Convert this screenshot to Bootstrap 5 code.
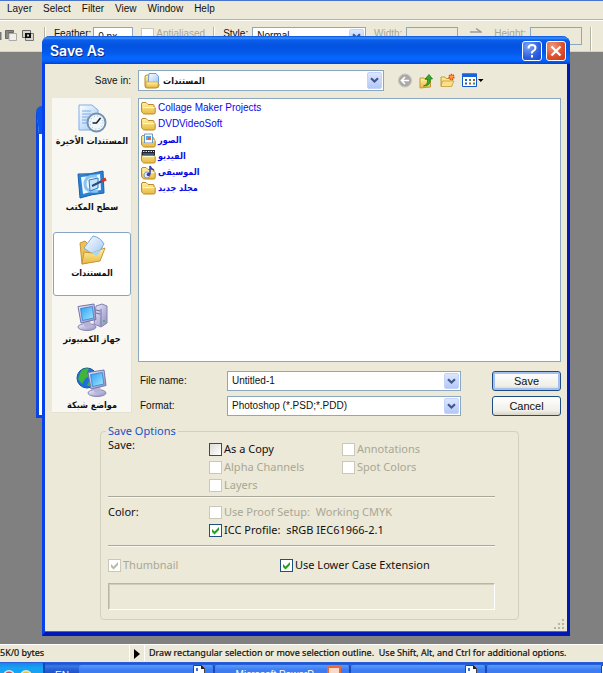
<!DOCTYPE html>
<html lang="en">
<head>
<meta charset="utf-8">
<meta name="viewport" content="width=device-width, initial-scale=1">
<title>Save As</title>
<link rel="stylesheet" href="https://cdn.jsdelivr.net/npm/bootstrap@5.3.0/dist/css/bootstrap.min.css">
<script src="https://cdn.jsdelivr.net/npm/bootstrap@5.3.0/dist/js/bootstrap.bundle.min.js"></script>
<style>
:root{--face:#ece9d8;--edge:#8ba8c0;--off:#a9a794;--ui:"Liberation Sans","DejaVu Sans Condensed",sans-serif}
body{font:10px/14px var(--ui);color:#111;background:gray;overflow:hidden}
button,input,select{font:inherit;color:inherit}
a{color:inherit;text-decoration:none}
.menu-strip{background:var(--face);border-top:1px solid #4a74cc;border-bottom:1px solid #b5b3a6;height:20px;padding:1px 7px 0;gap:11px}
.opt-strip{background:var(--face);border-top:1px solid #fff;border-bottom:1px solid #d5d2c2;height:32px;padding:6px 11px 0 0}
.opt-strip .field{width:52px;height:18px;border:1px solid var(--edge);background:#fff;padding:0 0 0 4px;border-radius:0}
.opt-strip .field.short{width:40px;margin-left:2px}
.opt-strip .field:disabled{background:var(--face)}
.opt-strip .combo{height:18px}
.rule{width:2px;flex:none;height:24px;background:#b5b3a6;border-right:1px solid #fff}
.dim{color:var(--off)}
.status{background:var(--face);border-top:1px solid #fff;height:18px;font:9px/16px "Noto Sans",sans-serif;-webkit-text-stroke:.2px #111}
.status .cell{border-right:1px solid #fff;height:16px}
.kb{width:130px}
.taskbar{height:11px;background:linear-gradient(#1c55d8 0 1px,#3a7ae6 3px,#2a62d8 6px,#1f52c8);border-top:1px solid #2860dc;overflow:hidden;color:#fff}
.start-zone{width:45px;background:linear-gradient(#1c86e8,#16a3f2 5px);border-right:2px solid #0e49b5;height:11px}
.lang{width:34px;line-height:26px}
.task{height:14px;margin-top:2px;background:linear-gradient(#5a9bfa,#3c7cf0 5px);border:0;border-right:2px solid #1c49b8;border-radius:3px;padding:0 8px;line-height:20px;flex:0 0 136px;overflow:hidden;white-space:nowrap;display:flex;justify-content:flex-end;gap:6px}
.behind{left:36px;top:106px;width:60px;height:312px;border:3px solid #0a45e0;border-top:28px solid #0a55ea;border-radius:6px 0 0 0;background:#fff}
.dialog-win{left:42px;right:33px;top:36px;background:var(--face);border:3px solid #0831d9;border-width:0 3px 4px;border-color:#0831d9 #0018b4 #0018b4 #0840ea;border-radius:8px 8px 0 0;box-shadow:inset 0 -1px #2b6cf0}
.title-strip{height:28px;margin:0 -3px;padding:1px 4px 0 8px;border-radius:8px 8px 0 0;background:linear-gradient(#0a4fd8,#3a92ff 2px,#0a5fec 4px,#0453e0 9px,#0458ea 16px,#0568ff 22px,#0560f8 25px,#0140d0);color:#fff;font:600 14px/27px Inter,sans-serif;text-shadow:1px 1px #0a2a86}
.title-strip h1{font:inherit;margin:0}
.cap{width:20px;height:20px;border:1px solid #fff;border-radius:3px;padding:0;display:flex;background:radial-gradient(circle at 30% 25%,#7ea4f6,#2c5fe0 60%,#1a48c8)}
.cap.shut{background:radial-gradient(circle at 30% 25%,#f0997e,#e0502c 55%,#c33818)}
.win-body{padding:6px 6px 12px 7px}
.look{margin-bottom:7px}
.look>label{width:86px;padding-right:7px;text-align:right}
.combo{height:20px;border:1px solid var(--edge);background:#fff;padding:1px;min-width:0}
.combo.tall{height:21px;flex:0 1 246px;margin-right:14px}
.combo select,.combo input{appearance:none;border:0;background:none;flex:1;min-width:0;padding:0 0 0 3px;outline:0}
.drop{width:15px;border:1px solid #c3d3fb;border-radius:2px;padding:0;background:linear-gradient(#dce7ff,#b4c8f6);display:flex;align-items:center;justify-content:center}
.tools{gap:7px}
.tool{border:0;background:none;padding:0;display:flex}
.ar,.ar select{font:bold 9px/14px "DejaVu Sans Condensed","DejaVu Sans",sans-serif}
.main-grid{display:grid;grid-template-columns:80px minmax(0,1fr);column-gap:6px}
.places{background:#f8f7f2;border:1px solid #e4e1d2;border-width:0 1px 1px 0;height:315px;overflow:hidden;padding:2px 0 0 1px}
.place{width:100%;height:64px;margin-bottom:2px;border:1px solid transparent;border-radius:3px;background:none;padding:2px 0 0;display:flex;flex-direction:column;align-items:center;white-space:nowrap}
.place svg{flex:none}
.place.now{background:#fff;border-color:#86a4c6}
.files{height:264px;border:1px solid var(--edge);background:#fff;padding:1px;margin:0 0 9px;list-style:none;color:#0808e8}
.files a{display:flex;align-items:center;gap:2px;height:16px}
.pair{display:grid;grid-template-columns:89px minmax(0,1fr) 69px;row-gap:5px;align-items:center}
.pair>label{padding-left:2px}
.pair .combo{margin-right:31px}
.push{height:20px;border:1px solid #1c4c82;border-radius:3px;background:linear-gradient(#fff,#f0efe8 75%,#d9d4c8);font-size:11px;line-height:16px;padding:0}
.push.go{box-shadow:inset 0 0 0 2px #a4c0f0}
.opts{font:11px/14px "Noto Sans",sans-serif;margin:8px 42px 0 48px;border:1px solid #d3d0bd;border-radius:4px;padding:0 23px 9px 7px}
.opts legend{font:inherit;float:none;width:auto;color:#1c50c8;padding:0 2px;margin:0 0 0 -2px;height:14px}
.sect{display:grid;grid-template-columns:101px 133px 1fr;border-bottom:1px solid #aaa899;box-shadow:0 1px #f8f7f0}
.sect .stack{display:grid;row-gap:4px;align-content:start}
.tick{display:flex;align-items:center;gap:2px;height:14px;white-space:nowrap}
.tick.thumb{width:172px}
.tick input{appearance:none;flex:none;width:13px;height:13px;border:1px solid #1c5180;background:linear-gradient(135deg,#dcdcd7,#fff);margin:0}
.tick input:disabled{border-color:#cac8bb;background:#fff}
.tick input:disabled+*{color:var(--off)}
.tick input:checked{background:url("data:image/svg+xml,%3Csvg xmlns='http://www.w3.org/2000/svg' viewBox='0 0 11 11'%3E%3Cpath d='M2 4v3l2.500 2.500L9 5V2L4.500 6.500z' fill='%2321a121'/%3E%3C/svg%3E") #fff}
.tick input:checked:disabled{background-image:url("data:image/svg+xml,%3Csvg xmlns='http://www.w3.org/2000/svg' viewBox='0 0 11 11'%3E%3Cpath d='M2 4v3l2.500 2.500L9 5V2L4.500 6.500z' fill='%23bbb9aa'/%3E%3C/svg%3E")}
.sunk{height:27px;margin-top:11px;border:1px solid;border-color:#b7b5a5 #fff #fff #b7b5a5;box-shadow:inset 1px 1px #d0cdbb}
.grip{right:2px;bottom:2px}
</style>
</head>
<body class="min-vh-100 d-flex flex-column position-relative">
<svg class="position-absolute" width="0" height="0" aria-hidden="true">
<defs>
<linearGradient id="gy" x2="0" y2="1"><stop stop-color="#fff3a8"/><stop offset="1" stop-color="#e9b93f"/></linearGradient>
<linearGradient id="gb" x2="1" y2="1"><stop stop-color="#2d9df4"/><stop offset="1" stop-color="#a4eaff"/></linearGradient>
<linearGradient id="gp" x2="1" y2="1"><stop stop-color="#f0effb"/><stop offset="1" stop-color="#8e8cc0"/></linearGradient>
<linearGradient id="gd" x2="1" y2="1"><stop stop-color="#fff"/><stop offset="1" stop-color="#9cc4f4"/></linearGradient>
</defs>
<symbol id="folder" viewBox="0 0 16 14"><path d="M1.500 3q0-1.500 1.500-1.500h3l2 2h5q1 0 1 1V6q1.200 0 1.200 1v4.500q0 1.500-1.500 1.500h-9Q3 13 2.500 12L1.500 10z" fill="url(#gy)" stroke="#b98a2a"/><path d="M3 6.500h11.500" stroke="#fff8cf"/></symbol>
<symbol id="caret" viewBox="0 0 9 7"><path d="M1 1.200l3.500 3.300L8 1.200" fill="none" stroke="#40568c" stroke-width="2.200"/></symbol>
<symbol id="page" viewBox="0 0 12 12"><path d="M.5.500h8l3 3V12H.5z" fill="#fff" stroke="#444"/><path d="M8 0v4h4" fill="#222"/><path d="M3 3h2v3H3z" fill="#3a70c8"/></symbol>
<symbol id="monitor" viewBox="0 0 22 28"><ellipse cx="11" cy="24" rx="9" ry="3.500" fill="url(#gp)" stroke="#8583b4"/><path d="M8 18l6-1 1 6q-4 2-7 0z" fill="#b5b4d8"/><path d="M2 3.500L18 1l2 15.500L5 20z" fill="url(#gp)" stroke="#7775aa"/><path d="M4.500 5.500L16.300 3.500l1.500 11.500L6.500 17.500z" fill="url(#gb)" stroke="#2878c8" stroke-width=".7"/></symbol>
</svg>

<nav class="menu-strip d-flex" aria-label="Menu">
<a href="#">Layer</a><a href="#">Select</a><a href="#">Filter</a><a href="#">View</a><a href="#">Window</a><a href="#">Help</a>
</nav>
<div class="opt-strip d-flex align-items-start">
<svg width="36" height="16" viewBox="0 0 36 16" class="flex-shrink-0"><path d="M0 5v8h1.500V5z" fill="#777"/><path d="M5.500 11.500V3.500h8v2h-5v6z" fill="#888" stroke="#666"/><path d="M9 6.500h7.500v7H9z" fill="#f2f0e6" stroke="#aaa"/><path d="M22.500 3.500h8v7h-8z" fill="#d8d6cc" stroke="#666"/><path d="M25.500 6.500h8v7h-8z" fill="#d8d6cc" stroke="#777"/><path d="M25 6h6v5h-6z" fill="#111"/><path d="M27 7.500h2v2h-2z" fill="#ccc"/></svg>
<span class="rule mx-2"></span>
<label for="feather">Feather:</label>
<input id="feather" class="field short" value="0 px">
<label class="tick ms-2"><input type="checkbox" disabled><span>Antialiased</span></label>
<span class="rule mx-2"></span>
<label for="sty">Style:</label>
<div class="combo d-flex ms-1 flex-grow-1"><select id="sty"><option>Normal</option></select><span class="drop"><svg width="9" height="7"><use href="#caret"/></svg></span></div>
<label for="w" class="dim ms-2 me-1">Width:</label><input id="w" class="field" disabled>
<svg class="mx-2 px-1 flex-shrink-0" width="20" height="12" viewBox="0 0 12 12"><path d="M0 5h8M6 1.500L11 5H5" fill="none" stroke="#999" stroke-width="1.500"/></svg>
<label for="h" class="dim me-1">Height:</label><input id="h" class="field" disabled>
<span class="rule ms-2"></span>
</div>

<div class="flex-grow-1"></div>
<div class="behind position-absolute"></div>

<main class="dialog-win position-absolute">
<div class="title-strip d-flex align-items-center">
<h1 class="flex-grow-1">Save As</h1>
<button class="cap me-1" aria-label="Help"><svg width="18" height="18"><path d="M5.500 6.500q0-3.500 3.500-3.500t3.500 3q0 1.800-2 2.800T9 11.500M9 13v2.500" fill="none" stroke="#fff" stroke-width="2"/></svg></button>
<button class="cap shut" aria-label="Close"><svg width="18" height="18"><path d="M4.500 4.500l9 9m0-9l-9 9" stroke="#fff" stroke-width="2.200"/></svg></button>
</div>
<div class="win-body">
<div class="look d-flex align-items-center">
<label for="savein">Save in:</label>
<div class="combo tall ar d-flex">
<svg class="ms-1 flex-shrink-0" width="16" height="17" viewBox="0 0 16 17"><path d="M1 5q0-2 2-2h2v9h10v1q0 3-3 3H3q-2 0-2-2z" fill="url(#gy)" stroke="#b98a2a"/><path d="M5 1.500h7l2.500 3V12H4z" fill="url(#gd)" stroke="#6f9fd4"/><path d="M2 10h12v4q0 1.500-2 1.500H3q-1 0-1-1z" fill="url(#gy)" stroke="#c7963a" stroke-width=".6"/></svg>
<select id="savein"><option>المستندات</option></select><span class="drop"><svg width="9" height="7"><use href="#caret"/></svg></span></div>
<div class="tools d-flex align-items-center">
<button class="tool" aria-label="Back"><svg width="14" height="15" viewBox="0 0 14 15"><circle cx="7" cy="7.500" r="6.500" fill="#aaa9a3" stroke="#c6c5be"/><path d="M7 4L3.500 7.500 7 11M4 7.500h7" fill="none" stroke="#fff" stroke-width="1.700"/></svg></button>
<button class="tool" aria-label="Up one level"><svg width="14" height="16" viewBox="0 0 14 16"><path d="M1 5h4l1 1.500h5.500V14L1 15z" fill="url(#gy)" stroke="#c39a35"/><path d="M4.500 13Q9 12 8.500 6H6l4-4.500L13.500 6H11.300Q12 13 4.500 13z" fill="#35a82e" stroke="#187318" stroke-width=".7"/></svg></button>
<button class="tool" aria-label="New folder"><svg width="15" height="15" viewBox="0 0 15 15"><path d="M1 4h4l1 1.500h6V13H1z" fill="url(#gy)" stroke="#c39a35"/><path d="M2.500 8H14l-2.500 5.500H1z" fill="#fbe08a" stroke="#c39a35" stroke-width=".7"/><circle cx="11.500" cy="4" r="2.400" fill="#ff9a3c" stroke="#e53b14" stroke-width="1.500" stroke-dasharray="1.200 .7"/></svg></button>
<button class="tool" aria-label="Views"><svg width="22" height="15" viewBox="0 0 22 15"><path d="M.5 1h14v12.500H.5z" fill="#fff" stroke="#1558c8"/><path d="M0 .5h15V4H0z" fill="#1b62dc"/><path d="M3 7h2M3 10.500h2" stroke="#2a58c0" stroke-width="1.800"/><path d="M7 7h2M11 10.500h2" stroke="#2a9a50" stroke-width="1.800"/><path d="M11 7h2M7 10.500h2" stroke="#c05030" stroke-width="1.800"/><path d="M16 6h5.500L18.800 9z" fill="#000"/></svg></button>
</div>
</div>
<div class="main-grid">
<div class="places ar">
<button class="place"><svg width="30" height="31" viewBox="0 0 30 31"><path d="M2 2h13l6 5v20H2z" fill="url(#gd)" stroke="#7eaee6"/><path d="M5 8h9M5 11h9M5 14h7M5 17h5M5 20h5" stroke="#78aee8"/><circle cx="19.500" cy="19.500" r="9" fill="#eef7fc" stroke="#7690ad" stroke-width="2"/><circle cx="19.500" cy="19.500" r="6.500" fill="none" stroke="#8eb8d8" stroke-dasharray="1 2.400"/><path d="M23.500 15l-4 5h-4" fill="none" stroke="#222" stroke-width="1.600"/></svg><span>المستندات الأخيرة</span></button>
<button class="place"><svg width="30" height="31" viewBox="0 0 30 31"><path d="M1 5q12 1 25-3l1 22q-12 1-24 5z" fill="#2a82d4" stroke="#1b5fae"/><path d="M4 8q9 0 19-3l1 16q-9 1-18 4z" fill="#f0f8ff"/><path d="M20 7q-12-1-12 8t13 7" fill="none" stroke="#8cc4f0" stroke-width="3"/><path d="M12 11l9-2v10l-8 3z" fill="#c6e4fb" stroke="#2c78c4"/><path d="M15 17l10-5" stroke="#274d7c" stroke-width="2"/><path d="M24.500 12l4.500-2" stroke="#d03a24" stroke-width="3.500"/></svg><span>سطح المكتب</span></button>
<button class="place now"><svg width="30" height="31" viewBox="0 0 30 31"><path d="M3 8l5-2 3 3 14 3-3 13L5 29z" fill="#eec252" stroke="#c5943a"/><path d="M7 13L16 1q7 1 11 8l-8 13z" fill="url(#gd)" stroke="#76aade"/><path d="M5 29L7 17l8 1 13-5-5 13z" fill="url(#gy)" stroke="#c5943a"/><path d="M14 18l11-4-5 7z" fill="#a8d6f6"/></svg><span>المستندات</span></button>
<button class="place"><svg width="32" height="31" viewBox="0 0 32 31"><path d="M20 5l6-2 5 2v17l-6 4-7-3z" fill="url(#gp)" stroke="#8482b8"/><path d="M25 8v17" stroke="#7775aa"/><path d="M20 9l4 1m-4 2l4 1" stroke="#6a68a0"/><circle cx="28" cy="20" r="1" fill="#3db83d"/><use href="#monitor" width="22" height="28" y="2"/></svg><span>جهاز الكمبيوتر</span></button>
<button class="place"><svg width="32" height="31" viewBox="0 0 32 31"><circle cx="11" cy="11" r="10" fill="#1e6fd6" stroke="#1a53a0"/><path d="M5 4q5-4 8-2l-2 4 2 3-4 3-3 5-4-5zM14 13l5 2-4 5-4-2z" fill="#3fb53a"/><use href="#monitor" width="22" height="28" x="10" y="2"/></svg><span>مواضع شبكة</span></button>
</div>
<div>
<ul class="files">
<li><a href="#"><svg width="16" height="14"><use href="#folder"/></svg>Collage Maker Projects</a></li>
<li><a href="#"><svg width="16" height="14"><use href="#folder"/></svg>DVDVideoSoft</a></li>
<li><a href="#" class="ar"><svg width="16" height="15" viewBox="0 0 16 15"><use href="#folder" width="16" height="14" y="1"/><path d="M4.500 1h8v9h-8z" fill="#fff" stroke="#6e94c2"/><path d="M6 3h5v4H6z" fill="#56a5e8"/><path d="M8 4h3v3H8z" fill="#d86a3c"/><path d="M2 10h12v3H3z" fill="#eec252"/></svg>الصور</a></li>
<li><a href="#" class="ar"><svg width="16" height="15" viewBox="0 0 16 15"><use href="#folder" width="16" height="14" y="1"/><path d="M2 1h13v5.500H2z" fill="#20242c"/><path d="M3 2.500h11" stroke="#dce4ee" stroke-dasharray="1.500 1"/><path d="M3 5h11" stroke="#5a88b4"/></svg>الفيديو</a></li>
<li><a href="#" class="ar"><svg width="16" height="15" viewBox="0 0 16 15"><use href="#folder" width="16" height="14" y="1"/><circle cx="7" cy="10" r="3" fill="#dfe8f5" stroke="#8a9cc0"/><path d="M10 9V1q1 3 4 4" fill="none" stroke="#3a3ab0" stroke-width="1.500"/><circle cx="8.500" cy="9.500" r="1.800" fill="#3a3ab0"/></svg>الموسيقى</a></li>
<li><a href="#" class="ar"><svg width="16" height="14"><use href="#folder"/></svg>مجلد جديد</a></li>
</ul>
<div class="pair">
<label for="fname">File name:</label>
<div class="combo d-flex"><input id="fname" value="Untitled-1"><button class="drop" aria-label="Recent names"><svg width="9" height="7"><use href="#caret"/></svg></button></div>
<button class="push go">Save</button>
<label for="fmt">Format:</label>
<div class="combo d-flex"><select id="fmt"><option>Photoshop (*.PSD;*.PDD)</option></select><span class="drop"><svg width="9" height="7"><use href="#caret"/></svg></span></div>
<button class="push">Cancel</button>
</div>
</div>
</div>
<fieldset class="opts">
<legend>Save Options</legend>
<div class="sect pb-1 mb-2">
<div>Save:</div>
<div class="stack pt-1">
<label class="tick"><input type="checkbox"><span>As a Copy</span></label>
<label class="tick"><input type="checkbox" disabled><span>Alpha Channels</span></label>
<label class="tick"><input type="checkbox" disabled><span>Layers</span></label>
</div>
<div class="stack pt-1">
<label class="tick"><input type="checkbox" disabled><span>Annotations</span></label>
<label class="tick"><input type="checkbox" disabled><span>Spot Colors</span></label>
</div>
</div>
<div class="sect pb-2 mb-2">
<div>Color:</div>
<div class="stack">
<label class="tick"><input type="checkbox" disabled><span>Use Proof Setup:&nbsp; Working CMYK</span></label>
<label class="tick"><input type="checkbox" checked><span>ICC Profile:&nbsp; sRGB IEC61966-2.1</span></label>
</div>
</div>
<div class="d-flex pt-1">
<label class="tick thumb"><input type="checkbox" checked disabled><span>Thumbnail</span></label>
<label class="tick"><input type="checkbox" checked><span>Use Lower Case Extension</span></label>
</div>
<div class="sunk"></div>
</fieldset>
</div>
<svg class="grip position-absolute" width="12" height="12" viewBox="0 0 12 12"><path d="M9 1h2v2H9zM5 5h2v2H5zM9 5h2v2H9zM1 9h2v2H1zM5 9h2v2H5zM9 9h2v2H9z" fill="#b8b5a2"/></svg>
</main>

<footer>
<div class="status d-flex">
<div class="cell kb flex-shrink-0 text-nowrap">5K/0 bytes</div>
<div class="cell px-1"><svg width="6" height="10" class="align-middle"><path d="M0 0l6 5-6 5z"/></svg></div>
<div class="ps-1 text-nowrap">Draw rectangular selection or move selection outline.&nbsp; Use Shift, Alt, and Ctrl for additional options.</div>
</div>
<div class="taskbar d-flex">
<div class="start-zone flex-shrink-0"><svg width="40" height="11" class="d-block"><circle cx="9" cy="13" r="6" fill="#d8e8fa"/><circle cx="9" cy="13" r="4.500" fill="#e04848"/><circle cx="26" cy="13" r="6" fill="#e8e8c8"/><circle cx="26" cy="13" r="4.500" fill="#f0c030"/></svg></div>
<div class="lang flex-shrink-0 text-center">EN</div>
<button class="task" aria-label="Document"><svg width="12" height="12"><use href="#page"/></svg></button><button class="task">Microsoft PowerP...<svg width="14" height="12"><path d="M0 1h14v11H0z" fill="#e8693a"/><path d="M2 3h10v9H2z" fill="#fbd9c6"/></svg></button><button class="task" aria-label="Document"><svg width="12" height="12"><use href="#page"/></svg></button><button class="task" aria-label="Document"><svg width="12" height="12"><use href="#page"/></svg></button>
</div>
</footer>
</body>
</html>
